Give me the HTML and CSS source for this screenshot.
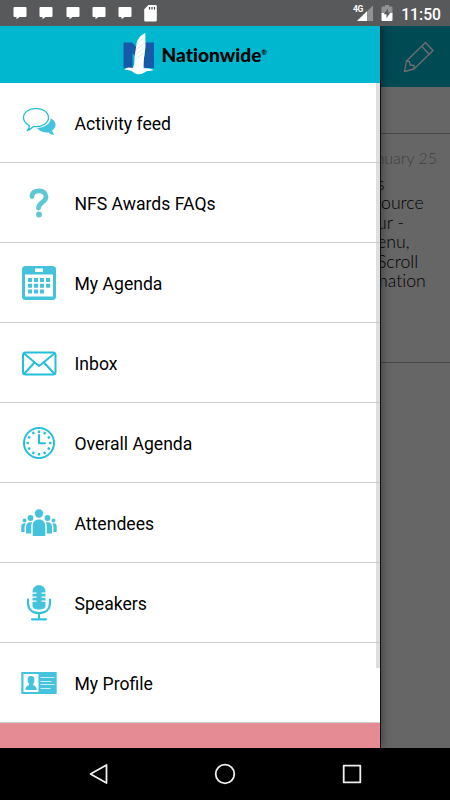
FILE: index.html
```html
<!DOCTYPE html>
<html lang="en">
<head>
    <meta charset="UTF-8">
    <meta name="viewport" content="width=device-width, initial-scale=1">
    <title>Nationwide</title>
    <link rel="stylesheet" href="styles.css">
</head>

<body>
    <div class="status-bar">
        <div class="notifications">
            <svg class="chat" viewBox="0 0 14 13"><path d="M1.5 0h11a1 1 0 0 1 1 1v8a1 1 0 0 1-1 1H6.5L3.5 12.3V10h-2a1 1 0 0 1-1-1V1a1 1 0 0 1 1-1z"/></svg>
            <svg class="chat" viewBox="0 0 14 13"><path d="M1.5 0h11a1 1 0 0 1 1 1v8a1 1 0 0 1-1 1H6.5L3.5 12.3V10h-2a1 1 0 0 1-1-1V1a1 1 0 0 1 1-1z"/></svg>
            <svg class="chat" viewBox="0 0 14 13"><path d="M1.5 0h11a1 1 0 0 1 1 1v8a1 1 0 0 1-1 1H6.5L3.5 12.3V10h-2a1 1 0 0 1-1-1V1a1 1 0 0 1 1-1z"/></svg>
            <svg class="chat" viewBox="0 0 14 13"><path d="M1.5 0h11a1 1 0 0 1 1 1v8a1 1 0 0 1-1 1H6.5L3.5 12.3V10h-2a1 1 0 0 1-1-1V1a1 1 0 0 1 1-1z"/></svg>
            <svg class="chat" viewBox="0 0 14 13"><path d="M1.5 0h11a1 1 0 0 1 1 1v8a1 1 0 0 1-1 1H6.5L3.5 12.3V10h-2a1 1 0 0 1-1-1V1a1 1 0 0 1 1-1z"/></svg>
            <svg class="sd-card" viewBox="0 0 13 17"><path d="M4.5 0h7a1.3 1.3 0 0 1 1.3 1.3v14a1.3 1.3 0 0 1-1.3 1.3h-10A1.3 1.3 0 0 1 .2 15.3V4.3z"/><path class="pins" d="M5.5 2v2.5M8 2v2.5M10.5 2v2.5"/></svg>
        </div>
        <div class="system">
            <svg class="signal" viewBox="0 0 20 18">
                <path class="dim" d="M20 1.5V17H4z"/>
                <path d="M14 7.3V17H4z"/>
                <text x="0" y="7.5">4G</text>
            </svg>
            <svg class="battery" viewBox="0 0 12 16">
                <path class="dim" d="M4 0h4v1.5h2.5a1 1 0 0 1 1 1V9H.5V2.5a1 1 0 0 1 1-1H4z"/>
                <path d="M.5 8h11v7a1 1 0 0 1-1 1h-9a1 1 0 0 1-1-1z"/>
                <path class="bolt" d="M6.8 3.5L2.8 9.3h2.7v4L9.3 7.6H6.8z"/>
            </svg>
            <span class="clock">11:50</span>
        </div>
    </div>

    <div class="screen">
        <div class="page">
            <div class="page-header">
                <svg class="pencil" viewBox="0 0 32 32">
                    <path d="M1.5 30.5L3.5 20 22.5 1.5l7.5 8L11 28z"/>
                    <path d="M18.7 5.2l7.5 8M3.5 20l3 .5.5 3.5 4 .5V28"/>
                </svg>
            </div>
            <div class="filter"></div>
            <div class="post">
                <div class="date">nuary 25</div>
                <p class="lines">
                    <span class="line">s</span>
                    <span class="line to-edge">source</span>
                    <span class="line">ur -</span>
                    <span class="line">enu,</span>
                    <span class="line">Scroll</span>
                    <span class="line to-edge">mation</span>
                </p>
            </div>
        </div>

        <div class="drawer">
            <div class="brand">
                <svg class="logo" viewBox="0 0 146 44">
                    <path class="blue" d="M.5 10.5H9L22 25V10.5h9v25.500H22L9.500 21v15h-9z"/>
                    <path class="eagle" d="M22.3.8c-5.500 3-8.500 7-9 13L11.500 25c.2 4-.3 8-1.500 11-2-.5-5-1-6.500 0L1.300 37.500l4.200.7c4 .2 5 3.400 9.500 4 4 .4 6-1.500 8.500-3l7.300-1c-3-1.700-6-2.400-10.300-1.900L21 26l1.500-11z"/>
                    <path class="feather" d="M20.500 6l-6.500 6M21.500 11l-8 6.500M21 16l-8.500 6.500M20.500 21.500L12 27"/>
                    <text class="name" x="38.500" y="30" textLength="100" lengthAdjust="spacingAndGlyphs">Nationwide</text>
                    <text class="mark" x="138.500" y="23">®</text>
                </svg>
            </div>
            <ul class="menu">
                <li>
                    <svg class="icon" viewBox="0 0 36 36">
                        <path class="fill" d="M29.5 13.5c3.5 1.5 5.5 4 5 7-.3 2-1.5 3.700-3.300 4.900.2 1.900 1.100 3.300 2.300 4.600-2.600-.2-4.600-1.300-6-2.600-5 .4-9.500-1.400-11.500-4.400 8-.5 14-4.500 13.500-9.500z"/>
                        <path class="line" d="M6.200 25.600c1.700-1.500 2.300-3.700 2-5.300C4.500 18.700 2.500 15.800 2.500 12.500 2.500 7.300 8.100 3.300 15 3.300s12.500 4 12.500 9.200-5.600 9.200-12.500 9.200c-.9 0-1.700 0-2.500-.2-1.800 1.800-3.900 3.300-6.300 4.100z"/>
                    </svg>
                    <span>Activity feed</span>
                </li>
                <li>
                    <svg class="icon question" viewBox="0 0 36 36">
                        <path class="thick" d="M11 11.500C11 7.500 14 5.800 18 5.800c4.300 0 7 2.500 7 6 0 5.700-7.500 5.500-7.500 11.200"/>
                        <circle class="fill" cx="18" cy="29.500" r="2.900"/>
                    </svg>
                    <span>NFS Awards FAQs</span>
                </li>
                <li>
                    <svg class="icon" viewBox="0 0 36 36">
                        <rect class="fill" x="1" y="1" width="34" height="34" rx="3.5"/>
                        <rect class="blank" x="14" y="3.5" width="8" height="3.5"/>
                        <rect class="blank" x="4" y="9.5" width="28" height="22"/>
                        <path class="fill" d="M7 13h4v4H7zM13 13h4v4h-4zM19 13h4v4h-4zM25 13h4v4h-4zM7 18.800h4v4H7zM13 18.800h4v4h-4zM19 18.800h4v4h-4zM25 18.800h4v4h-4zM7 24.600h4v4H7zM13 24.600h4v4h-4zM19 24.600h4v4h-4z"/>
                    </svg>
                    <span>My Agenda</span>
                </li>
                <li>
                    <svg class="icon" viewBox="0 0 36 36">
                        <rect class="medium" x="2" y="7.5" width="32.5" height="22" rx="2.5"/>
                        <path class="medium" d="M3 8.500L18 21 33.500 8.500M3 29L13.500 17.500M33.500 29L23 17.500"/>
                    </svg>
                    <span>Inbox</span>
                </li>
                <li>
                    <svg class="icon" viewBox="0 0 36 36">
                        <circle class="medium" cx="18" cy="18" r="15"/>
                        <circle class="ticks" cx="18" cy="18" r="11.3" pathLength="120"/>
                        <path class="medium" d="M18 10v8.200h6"/>
                    </svg>
                    <span>Overall Agenda</span>
                </li>
                <li>
                    <svg class="icon" viewBox="0 0 36 36">
                        <circle class="fill" cx="18" cy="8.5" r="4.2"/>
                        <circle class="fill" cx="9.5" cy="13" r="2.9"/>
                        <circle class="fill" cx="26.5" cy="13" r="2.9"/>
                        <circle class="fill" cx="3.5" cy="15.5" r="1.9"/>
                        <circle class="fill" cx="32.5" cy="15.5" r="1.9"/>
                        <path class="fill" d="M11.700 31V21c0-4 2.500-6.500 6.300-6.500s6.300 2.500 6.300 6.500v10zM5 28.500V22c0-3 1.500-4.700 4.500-4.700h1.800c-.8 1.200-1.100 2.500-1.100 4v7.200zM31 28.500V22c0-3-1.500-4.700-4.500-4.700h-1.800c.8 1.200 1.100 2.500 1.100 4v7.200zM.3 27v-5.500c0-2 1-3.200 3-3.200h1.400c-.7 1-1.100 2.200-1.100 3.700v5zM35.700 27v-5.500c0-2-1-3.200-3-3.200h-1.400c.7 1 1.100 2.200 1.100 3.700v5z"/>
                    </svg>
                    <span>Attendees</span>
                </li>
                <li>
                    <svg class="icon" viewBox="0 0 36 36">
                        <path class="fill" d="M11.500 7.500C11.500 3 14 .3 18 .3s6.500 2.700 6.500 7.200v13.500c0 2-2.500 3.500-6.500 3.500s-6.500-1.500-6.500-3.500z"/>
                        <path class="gaps" d="M11 8.200h4.500M20.500 8.200H25M11 12.200h4.500M20.500 12.200H25M11 16.200h4.500M20.500 16.200H25"/>
                        <path class="stand" d="M7 14.500v3.200C7 24.500 11.500 28 18 28s11-3.500 11-10.300v-3.200M18 28v6M11 34.300h14"/>
                    </svg>
                    <span>Speakers</span>
                </li>
                <li>
                    <svg class="icon" viewBox="0 0 36 36">
                        <rect class="fill" x=".3" y="7" width="35.4" height="22" rx=".5"/>
                        <rect class="blank" x="2.5" y="9" width="15" height="18"/>
                        <path class="fill" d="M10 11c2.500 0 3.500 1.600 3.500 4 0 1.700-.6 2.800-1.300 3.700v1.600c2 .8 3.500 1.500 3.500 4.700H4.500c0-3.200 1.500-3.900 3.500-4.700v-1.600c-.8-.9-1.400-2-1.400-3.700 0-2.400 1-4 3.400-4z"/>
                        <path class="details" d="M19.500 12.500h14M19.500 16.500h11M19.500 19.500h14M19.500 23.500h10"/>
                    </svg>
                    <span>My Profile</span>
                </li>
            </ul>
            <div class="banner"></div>
            <div class="scrollbar"></div>
        </div>
    </div>

    <div class="nav-bar">
        <svg viewBox="0 0 24 24"><path d="M19.5 3v18L3.5 12z"/></svg>
        <svg viewBox="0 0 24 24"><circle cx="12" cy="12" r="9.3"/></svg>
        <svg viewBox="0 0 24 24"><rect x="3.7" y="3.7" width="16.6" height="16.6"/></svg>
    </div>
</body>
</html>
```
FILE: styles.css
```css
body {
    font-family: Roboto, sans-serif;
    display: flex;
    flex-direction: column;
    height: 800px;
    margin: 0;
    overflow: hidden;
    background-color: #000;
}

svg {
    display: block;
    flex-shrink: 0;
}

/* status bar */
.status-bar {
    display: flex;
    justify-content: space-between;
    height: 26px;
    background-color: #58595b;
    color: #fff;
}

.status-bar svg {
    fill: #fff;
}

.notifications {
    display: flex;
    gap: 12.3px;
    padding-left: 13px;
}

.chat {
    width: 14px;
    height: 13px;
    margin-top: 7px;
}

.sd-card {
    width: 13px;
    height: 17px;
    margin-top: 5px;
}

.sd-card .pins {
    stroke: #444;
    stroke-width: 1.2;
}

.system {
    display: flex;
    padding-right: 9px;
}

.signal {
    width: 20px;
    height: 18px;
    margin-top: 4px;
    overflow: visible;
}

.signal text {
    font-size: 8.5px;
    font-weight: 700;
    letter-spacing: -0.4px;
}

.status-bar .dim {
    fill: #929294;
}

.battery {
    width: 12px;
    height: 16px;
    margin: 5px 8px 0 8px;
}

.status-bar .bolt {
    fill: #58595b;
}

.clock {
    font-size: 15.7px;
    font-weight: 500;
    line-height: 29px;
}

/* dimmed page behind the drawer */
.screen {
    position: relative;
    height: 722px;
    overflow: hidden;
}

.page {
    height: 100%;
    background-color: #666;
}

.page-header {
    display: flex;
    justify-content: flex-end;
    height: 61px;
    background-color: #004a54;
}

.pencil {
    width: 32px;
    height: 32px;
    margin: 15px 15px 0 0;
    fill: none;
    stroke: #716f70;
    stroke-width: 1.3;
    stroke-linejoin: round;
}

.filter {
    height: 46px;
    border-bottom: 1px solid #484848;
}

.post {
    height: 213px;
    padding: 15px 13px 0 377px;
    border-bottom: 1px solid #484848;
    font-family: Lato, sans-serif;
    font-weight: 300;
    font-variant-ligatures: none;
}

.date {
    display: flex;
    justify-content: flex-end;
    font-size: 16px;
    line-height: 18px;
    color: #424242;
    white-space: nowrap;
}

.lines {
    margin: 7px 0 0;
    font-size: 17.7px;
    line-height: 19.4px;
    color: #000;
}

.line {
    display: block;
    white-space: nowrap;
}

.to-edge {
    margin-left: -3.5px;
}

/* drawer */
.drawer {
    position: absolute;
    top: 0;
    left: 0;
    width: 380px;
    height: 722px;
    background-color: #fff;
    box-shadow: 1px 0 0 #111, 2px 0 9px rgba(0, 0, 0, 0.4);
}

.brand {
    display: flex;
    height: 57px;
    background-color: #00b7d0;
}

.logo {
    width: 146px;
    height: 44px;
    margin: 6px 0 0 123px;
}

.logo .blue {
    fill: #1659a8;
}

.logo .eagle {
    fill: #fff;
}

.logo .feather {
    stroke: #a9c3dc;
    stroke-width: 0.4;
}

.logo .name {
    font-family: Lato, sans-serif;
    font-size: 19px;
    font-weight: 900;
    font-variant-ligatures: none;
}

.logo .mark {
    font-family: Lato, sans-serif;
    font-size: 6.5px;
    font-weight: 900;
}

.menu {
    list-style: none;
    margin: 0;
    padding: 0;
}

.menu li {
    display: flex;
    align-items: center;
    gap: 17.5px;
    box-sizing: border-box;
    height: 80px;
    padding-left: 21px;
    border-bottom: 1px solid #d2d2d2;
    font-size: 17.6px;
    color: #000;
}

.menu li span {
    padding-top: 3px;
}

.icon {
    width: 36px;
    height: 36px;
    margin-top: 1px;
    fill: none;
    stroke-linecap: round;
    stroke-linejoin: round;
}

.icon .fill {
    fill: #45c3dc;
}

.icon .blank {
    fill: #fff;
}

.icon .line,
.icon .medium {
    stroke: #25bfdc;
    stroke-width: 1.3;
}

.icon .medium {
    stroke-width: 2;
}

.icon .ticks {
    stroke: #25bfdc;
    stroke-width: 2.4;
    stroke-linecap: butt;
    stroke-dasharray: 4 6;
    stroke-dashoffset: 2;
}

.icon .gaps,
.icon .details {
    stroke: #fff;
    stroke-width: 1.3;
    stroke-linecap: butt;
}

.icon .details {
    stroke: #c8edf4;
    stroke-width: 1;
}

.icon .stand {
    stroke: #35c1dc;
    stroke-width: 2.2;
}

.icon .thick {
    stroke: #5bc8d3;
    stroke-width: 4.8;
}

.question .fill {
    fill: #5bc8d3;
}

.banner {
    height: 25px;
    background-color: #e58b93;
}

.scrollbar {
    position: absolute;
    top: 57px;
    right: 0;
    width: 4px;
    height: 585px;
    background-color: rgba(190, 190, 190, 0.5);
}

/* navigation buttons */
.nav-bar {
    display: flex;
    justify-content: space-between;
    align-items: center;
    height: 52px;
    padding: 0 86.5px;
    background-color: #000;
}

.nav-bar svg {
    width: 24px;
    height: 24px;
    fill: none;
    stroke: #eee;
    stroke-width: 1.8;
    stroke-linejoin: round;
}
```
